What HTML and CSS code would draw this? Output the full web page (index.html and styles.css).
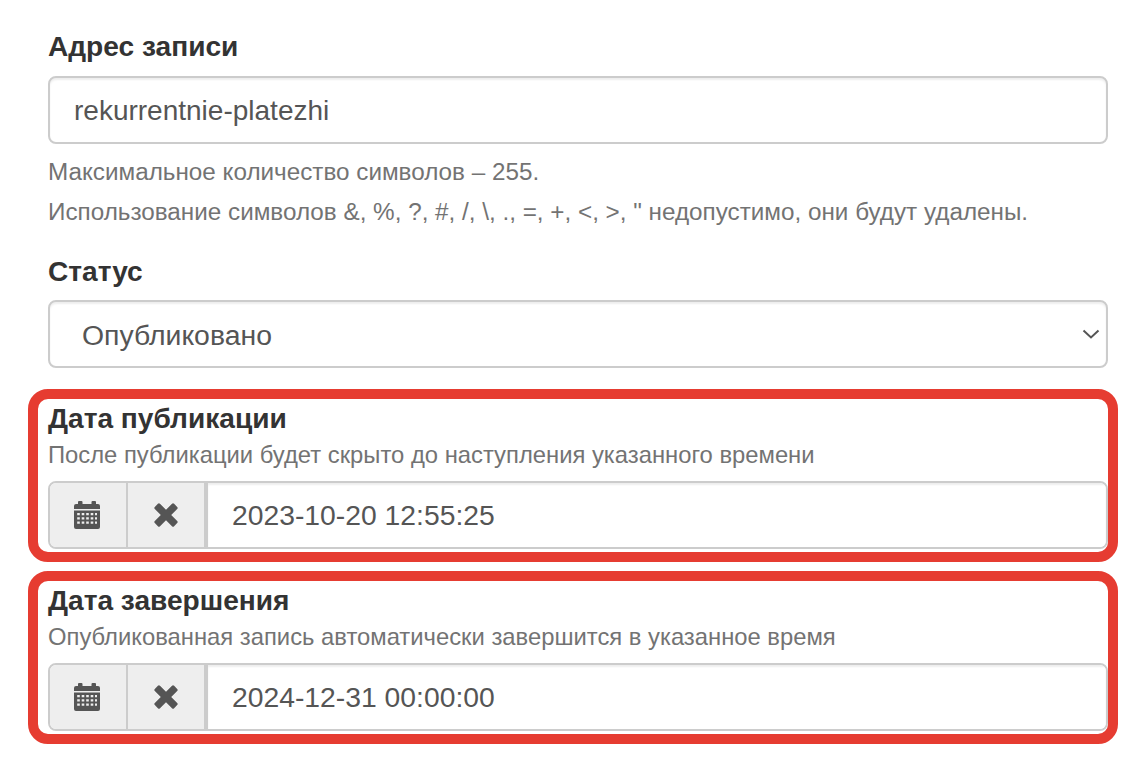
FILE: index.html
```html
<!DOCTYPE html>
<html lang="en">
<head>
<meta charset="UTF-8">
<meta name="viewport" content="width=device-width, initial-scale=1.0">
<title>Запись</title>
<link rel="stylesheet" href="styles.css">
</head>
<body>

<svg class="icon-defs" width="0" height="0">
  <defs>
    <symbol id="icon-calendar" viewBox="0 0 26 28">
      <path fill="#555" fill-rule="evenodd" d="M5 0h2.500a1 1 0 0 1 1 1v2h9V1a1 1 0 0 1 1-1H21a1 1 0 0 1 1 1v2h2a2 2 0 0 1 2 2v3H0V5a2 2 0 0 1 2-2h2V1a1 1 0 0 1 1-1zM0 9.500h26V26a2 2 0 0 1-2 2H2a2 2 0 0 1-2-2zM3.200 12v2.200h2.600V12zM7.700 12v2.200h2.600V12zM12.200 12v2.200h2.600V12zM16.700 12v2.200h2.600V12zM21 12v2.200h2V12zM3.200 16.300v2.200h2.600v-2.200zM7.700 16.300v2.200h2.600v-2.200zM12.200 16.300v2.200h2.600v-2.200zM16.700 16.300v2.200h2.600v-2.200zM21 16.300v2.200h2v-2.200zM3.200 20.600v2.200h2.600v-2.200zM7.700 20.600v2.200h2.600v-2.200zM12.200 20.600v2.200h2.600v-2.200zM16.700 20.600v2.200h2.600v-2.200zM21 20.600v2.200h2v-2.200z"/>
    </symbol>
    <symbol id="icon-remove" viewBox="0 0 24 24">
      <path fill="#555" d="M6 .8 12 6.800 18 .8a1.500 1.500 0 0 1 2.100 0l3.100 3.100a1.500 1.500 0 0 1 0 2.100l-6 6 6 6a1.500 1.500 0 0 1 0 2.100l-3.100 3.100a1.500 1.500 0 0 1-2.100 0l-6-6-6 6a1.500 1.500 0 0 1-2.100 0L.8 20.100a1.500 1.500 0 0 1 0-2.100l6-6-6-6a1.500 1.500 0 0 1 0-2.100L3.900.8A1.500 1.500 0 0 1 6 .8z"/>
    </symbol>
  </defs>
</svg>

<div class="container">
  <div class="form-group">
    <label class="field-label" for="slug">Адрес записи</label>
    <input class="form-control" type="text" id="slug" value="rekurrentnie-platezhi">
    <p class="help-text first">Максимальное количество символов – 255.</p>
    <p class="help-text">Использование символов &amp;, %, ?, #, /, \, ., =, +, &lt;, &gt;, " недопустимо, они будут удалены.</p>
  </div>

  <div class="form-group status-group">
    <label class="field-label" for="status">Статус</label>
    <div class="select-box" id="status">
      <span class="select-value">Опубликовано</span>
      <svg class="select-arrow" width="18" height="10" viewBox="0 0 18 10"><path d="M1.500 1.500 9 8.500l7.500-7" fill="none" stroke="#555" stroke-width="2"/></svg>
    </div>
  </div>

  <div class="marked">
    <div class="field-label tight">Дата публикации</div>
    <div class="date-hint">После публикации будет скрыто до наступления указанного времени</div>
    <div class="input-group">
      <span class="addon addon-first"><svg class="icon-cal"><use href="#icon-calendar"/></svg></span>
      <span class="addon addon-last"><svg class="icon-x"><use href="#icon-remove"/></svg></span>
      <input class="date-input" type="text" value="2023-10-20 12:55:25">
    </div>
  </div>

  <div class="marked second">
    <div class="field-label tight">Дата завершения</div>
    <div class="date-hint">Опубликованная запись автоматически завершится в указанное время</div>
    <div class="input-group">
      <span class="addon addon-first"><svg class="icon-cal"><use href="#icon-calendar"/></svg></span>
      <span class="addon addon-last"><svg class="icon-x"><use href="#icon-remove"/></svg></span>
      <input class="date-input" type="text" value="2024-12-31 00:00:00">
    </div>
  </div>
</div>

</body>
</html>
```

FILE: styles.css
```css
body {
  font-family: "Liberation Sans", Arial, sans-serif;
  margin: 0;
  padding: 0;
  background-color: #fff;
  color: #333;
}

.icon-defs {
  position: absolute;
}

.container {
  width: 1060px;
  margin-left: 48px;
  padding-top: 31px;
}

.field-label {
  display: block;
  font-size: 28.1px;
  line-height: 32px;
  font-weight: bold;
  color: #333;
  margin-bottom: 13px;
}

.field-label.tight {
  margin-bottom: 0;
}

.form-control {
  display: block;
  box-sizing: border-box;
  width: 100%;
  height: 68px;
  padding: 2px 24px 0;
  font-family: inherit;
  font-size: 28px;
  color: #555;
  background-color: #fff;
  border: 2px solid #ccc;
  border-radius: 8px;
  box-shadow: inset 0 2px 2px rgba(0, 0, 0, 0.07);
  outline: none;
}

.help-text {
  margin: 0;
  font-size: 24.25px;
  line-height: 30px;
  color: #737373;
}

.help-text.first {
  margin-top: 13px;
  margin-bottom: 10px;
}

.status-group {
  margin-top: 29px;
}

.status-group .field-label {
  margin-bottom: 12px;
}

.select-box {
  box-sizing: border-box;
  height: 68px;
  padding: 0 6px 0 32px;
  display: flex;
  align-items: center;
  justify-content: space-between;
  font-size: 28.4px;
  color: #555;
  border: 2px solid #ccc;
  border-radius: 8px;
  box-shadow: inset 0 2px 2px rgba(0, 0, 0, 0.07);
}

.select-value {
  padding-top: 2px;
}

.marked {
  box-sizing: border-box;
  width: 1090px;
  height: 173px;
  margin: 21px 0 0 -20px;
  padding: 4px 0 0 10px;
  border: 10px solid #e63c31;
  border-radius: 20px;
}

.marked.second {
  margin-top: 9px;
}

.date-hint {
  font-size: 23.8px;
  line-height: 30px;
  color: #737373;
  margin-top: 5px;
  margin-bottom: 11px;
}

.input-group {
  display: flex;
  box-sizing: border-box;
  height: 68px;
  width: 1060px;
  border: 2px solid #ccc;
  border-radius: 8px;
  overflow: hidden;
}

.addon {
  flex: none;
  display: flex;
  align-items: center;
  justify-content: center;
  box-sizing: border-box;
  width: 78px;
  background-color: #eee;
  border-right: 2px solid #ccc;
}

.addon-first {
  padding-right: 2px;
}

.addon-last {
  width: 80px;
  border-right-width: 4px;
}

.icon-cal {
  width: 26px;
  height: 28px;
}

.icon-x {
  width: 24px;
  height: 24px;
}

.date-input {
  flex: 1;
  min-width: 0;
  padding: 0 24px;
  border: none;
  outline: none;
  font-family: inherit;
  font-size: 28.3px;
  color: #555;
  box-shadow: inset 0 2px 2px rgba(0, 0, 0, 0.07);
}
```
